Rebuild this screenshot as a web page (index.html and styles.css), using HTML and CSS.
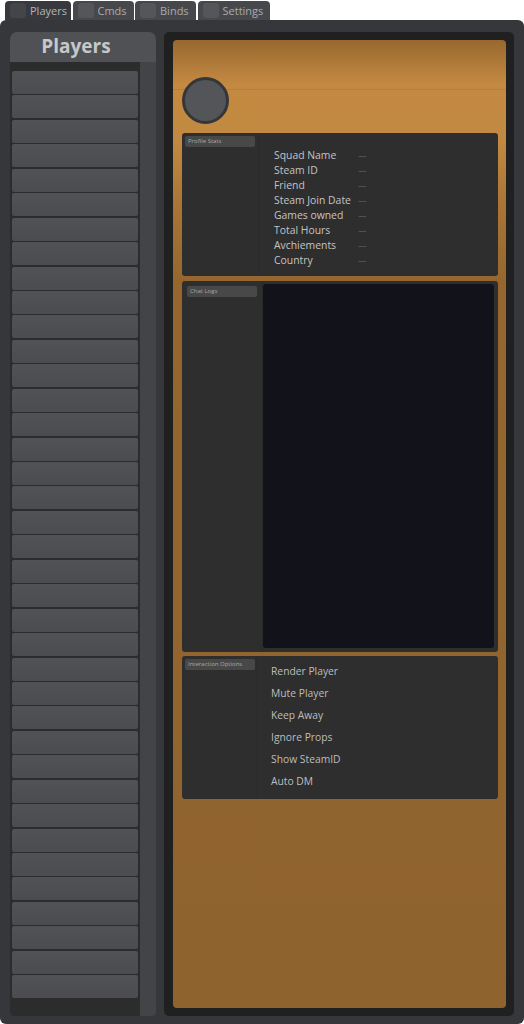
FILE: index.html
```html
<!DOCTYPE html>
<html>
<head>
<meta charset="utf-8">
<link rel="stylesheet" href="styles.css">
</head>
<body>
<div class="tabs">
  <div class="tab active w1"><span class="ticon"></span>Players</div>
  <div class="tab w2"><span class="ticon"></span>Cmds</div>
  <div class="tab w3"><span class="ticon"></span>Binds</div>
  <div class="tab w4"><span class="ticon"></span>Settings</div>
</div>
<div class="window">
  <div class="sidebar">
    <div class="side-head">Players</div>
    <div class="side-body">
      <div class="plist">
        <div class="pitem"></div><div class="pitem"></div><div class="pitem"></div><div class="pitem"></div>
        <div class="pitem"></div><div class="pitem"></div><div class="pitem"></div><div class="pitem"></div>
        <div class="pitem"></div><div class="pitem"></div><div class="pitem"></div><div class="pitem"></div>
        <div class="pitem"></div><div class="pitem"></div><div class="pitem"></div><div class="pitem"></div>
        <div class="pitem"></div><div class="pitem"></div><div class="pitem"></div><div class="pitem"></div>
        <div class="pitem"></div><div class="pitem"></div><div class="pitem"></div><div class="pitem"></div>
        <div class="pitem"></div><div class="pitem"></div><div class="pitem"></div><div class="pitem"></div>
        <div class="pitem"></div><div class="pitem"></div><div class="pitem"></div><div class="pitem"></div>
        <div class="pitem"></div><div class="pitem"></div><div class="pitem"></div><div class="pitem"></div>
        <div class="pitem"></div><div class="pitem"></div>
      </div>
      <div class="track"></div>
    </div>
  </div>
  <div class="frame">
    <div class="profile">
      <div class="banner"><div class="avatar"></div></div>
      <div class="card stats">
        <div class="lcol"><div class="pill">Profile Stats</div></div>
        <div class="stats-body">
          <div class="srow"><span class="slabel">Squad Name</span><span class="dash">—</span></div>
          <div class="srow"><span class="slabel">Steam ID</span><span class="dash">—</span></div>
          <div class="srow"><span class="slabel">Friend</span><span class="dash">—</span></div>
          <div class="srow"><span class="slabel">Steam Join Date</span><span class="dash">—</span></div>
          <div class="srow"><span class="slabel">Games owned</span><span class="dash">—</span></div>
          <div class="srow"><span class="slabel">Total Hours</span><span class="dash">—</span></div>
          <div class="srow"><span class="slabel">Avchiements</span><span class="dash">—</span></div>
          <div class="srow"><span class="slabel">Country</span><span class="dash">—</span></div>
        </div>
      </div>
      <div class="card chat">
        <div class="lcol chat-l"><div class="pill">Chat Logs</div></div>
        <div class="chatbox"></div>
      </div>
      <div class="card opts">
        <div class="lcol opts-l"><div class="pill">Interaction Options</div></div>
        <div class="opts-body">
          <div class="opt">Render Player</div>
          <div class="opt">Mute Player</div>
          <div class="opt">Keep Away</div>
          <div class="opt">Ignore Props</div>
          <div class="opt">Show SteamID</div>
          <div class="opt">Auto DM</div>
        </div>
      </div>
    </div>
  </div>
</div>
</body>
</html>
```
FILE: styles.css
```css
* { box-sizing: border-box; }
html, body { margin: 0; padding: 0; background: #ffffff; }
body { font-family: "Open Sans", "DejaVu Sans", sans-serif; width: 524px; height: 1024px; overflow: hidden; }

.tabs { display: flex; height: 20px; padding: 1px 0 0 5px; gap: 1.5px; }
.tab {
  height: 19px;
  background: #47484c;
  border-radius: 4px 4px 0 0;
  display: flex;
  align-items: center;
  padding-left: 5px;
  font-size: 11px;
  color: #a9aaad;
}
.tab.active { background: #38393e; color: #b4b5b8; }
.w1 { width: 66px; }
.w2 { width: 61px; }
.w3 { width: 61px; }
.w4 { width: 72px; }
.ticon { width: 16px; height: 15px; border-radius: 3px; background: #55565a; margin-right: 4px; flex: none; }
.tab.active .ticon { background: #444549; }

.window {
  height: 1004px;
  background: #36373b;
  border-radius: 6px;
  display: flex;
  gap: 8px;
  padding: 12px 10px 8px 10px;
}

.sidebar { width: 146px; display: flex; flex-direction: column; }
.side-head {
  height: 30px;
  background: #505154;
  border-radius: 7px 7px 0 0;
  font-weight: 700;
  font-size: 19px;
  line-height: 29px;
  text-align: center;
  padding-right: 14px;
  color: #c6c7c9;
}
.side-body { flex: 1; background: #2c2c2c; display: flex; border-radius: 0 0 4px 4px; overflow: hidden; }
.plist { width: 128px; padding: 9px 0 0 2px; display: flex; flex-direction: column; gap: 1.45px; }
.pitem { height: 23px; width: 126px; flex: none; background: linear-gradient(#515255, #4b4c4f); border-radius: 2px; }
.track { width: 16px; margin-left: 2px; background: #434448; }

.frame {
  width: 350px;
  background: #1f201f;
  border-radius: 5px;
  padding: 8px 8px 8px 9px;
  display: flex;
}
.profile {
  flex: 1;
  border-radius: 4px;
  padding: 0 8px 8px 9px;
  background:
    linear-gradient(to bottom, transparent 49px, rgba(140, 85, 30, 0.22) 49px, rgba(140, 85, 30, 0.22) 50px, transparent 50px),
    linear-gradient(to bottom, #98682f 0px, #c48a42 45px, #c28942 100px, #a97536 165px, #95672f 240px, #8f632e 968px);
}
.banner { height: 93px; padding-top: 37px; }
.avatar { width: 47px; height: 47px; border-radius: 50%; background: #545559; border: 3.5px solid #35363a; }

.card { background: #2e2e2e; border-radius: 3px; display: flex; }
.lcol { width: 77px; flex: none; border-right: 1px solid #2a2a2a; padding: 3px; }
.pill {
  height: 10.5px;
  background: #484848;
  border-radius: 2px;
  font-size: 6px;
  line-height: 10.5px;
  color: #a8a8a8;
  padding-left: 3px;
  white-space: nowrap;
}

.stats { height: 143px; }
.stats-body { padding: 14.5px 0 0 15px; }
.srow { display: flex; height: 15px; line-height: 15px; font-size: 10.4px; color: #c4c4c4; }
.slabel { width: 84px; flex: none; }
.dash { font-size: 8.5px; color: #606060; }

.chat { height: 371px; margin-top: 5px; }
.chat-l { width: 81px; padding: 5px; }
.chatbox { flex: 1; margin: 3px 4px 4.5px 0; background: #12121a; border-radius: 3px; }

.opts { height: 143px; margin-top: 4px; }
.opts-l { width: 76px; padding: 3px 2px 3px 3px; }
.opts-body { padding: 4px 0 0 13px; }
.opt { height: 22px; line-height: 22px; font-size: 10.3px; color: #bdbdbd; }
```
